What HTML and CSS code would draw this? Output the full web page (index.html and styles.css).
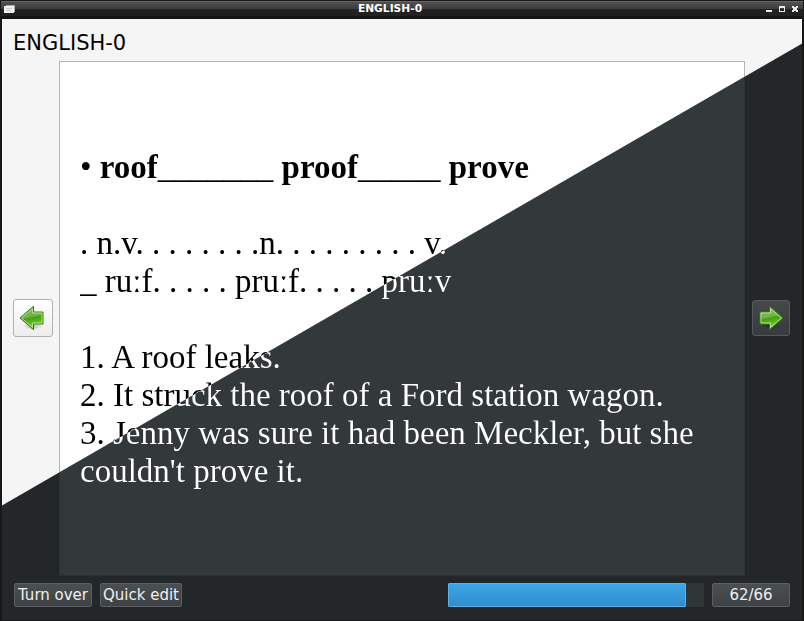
FILE: index.html
```html
<!DOCTYPE html>
<html lang="en">
<head>
<meta charset="utf-8">
<title>ENGLISH-0</title>
<link rel="stylesheet" href="styles.css">
</head>
<body>
<div class="window">
  <header class="titlebar">
    <svg class="app-icon" width="12" height="10" viewBox="0 0 12 10"><path d="M2 1h9v7H2z" fill="#aaa"/><path d="M0 2h10v7H0z" fill="#f1f1ee"/><path d="M2 4.500h6M2 6.500h5" stroke="#ccc"/></svg>
    <span class="caption">ENGLISH-0</span>
    <svg class="controls" width="34" height="8" viewBox="0 0 34 8" shape-rendering="crispEdges"><path d="M0 5h6v2H0z" fill="#e8e8e8"/><path fill-rule="evenodd" d="M13 1h6v6h-6zM14 3v3h4V3z" fill="#e8e8e8"/><path d="M26 1h2v1h2V1h2v2h-1v2h1v2h-2V6h-2v1h-2V5h1V3h-1z" fill="#e8e8e8"/></svg>
  </header>
  <main class="content">
    <h1 class="deck">ENGLISH-0</h1>
    <section class="review">
      <button class="nav prev" aria-label="Previous">
        <svg width="26" height="26" viewBox="0 0 26 26"><defs><linearGradient id="green" x1="0" y1="0" x2=".2" y2="1"><stop offset="0" stop-color="#8cc765"/><stop offset=".5" stop-color="#6cb346"/><stop offset=".58" stop-color="#45a010"/><stop offset="1" stop-color="#7bd52a"/></linearGradient><radialGradient id="shade"><stop offset="0" stop-opacity=".25"/><stop offset="1" stop-opacity="0"/></radialGradient></defs><ellipse cx="14" cy="21" rx="10" ry="4" fill="url(#shade)"/><path d="M1 13 14.500 1.300V7h9.500v12h-9.500v5.700z" fill="url(#green)" stroke="#327810"/><path d="M2.600 13 13.500 3.600V8H23v10h-9.500v4.400z" fill="none" stroke="#b9e39a" stroke-width=".9"/></svg>
      </button>
      <div class="card"><div class="face"><article class="text"><p>• <b>roof</b>_______ <b>proof</b>_____ <b>prove</b></p><p class="gap">. n.v. . . . . . . .n. . . . . . . . . v.</p><p>_ ruːf. . . . . pruːf. . . . . pruːv</p><p class="gap">1. A roof leaks.</p><p>2. It struck the roof of a Ford station wagon.</p><p>3. Jenny was sure it had been Meckler, but she<br>couldn't prove it.</p></article></div></div>
      <button class="nav next" aria-label="Next">
        <svg width="26" height="26" viewBox="0 0 26 26"><ellipse cx="12" cy="21" rx="10" ry="4" fill="url(#shade)"/><path d="M25 13 11.500 1.300V7H2v12h9.500v5.700z" fill="url(#green)" stroke="#357d12"/><path d="M23.400 13 12.500 3.600V8H3v10h9.500v4.400z" fill="none" stroke="#b9e39a" stroke-width=".9"/></svg>
      </button>
    </section>
    <footer class="toolbar">
      <button class="btn turn">Turn over</button>
      <button class="btn edit">Quick edit</button>
      <div class="progress"><div class="bar"></div></div>
      <button class="btn count">62/66</button>
    </footer>
  </main>
</div>
</body>
</html>
```
FILE: styles.css
```css
* { box-sizing: border-box; }
body { margin: 0; background: #161616; font-family: "DejaVu Sans", sans-serif; }
svg { display: block; }
p, h1 { margin: 0; }
button { margin: 0; padding: 0; font: inherit; }

.window { width: 804px; height: 621px; padding: 0 2px 2px; display: flex; flex-direction: column; background: #171717; overflow: hidden; }
.titlebar {
  flex: none; height: 19px; margin: 0 -1px; padding: 0 3px 2px;
  display: flex; align-items: center;
  background: linear-gradient(#171717 0 1px, #666 1px 2px, #515151 2px, #3d3d3d 9px, #222 9px, #202020 16px, #151515 16px);
}
.app-icon { width: 12px; }
.caption { flex: 1; text-align: center; color: #fff; font-size: 10.67px; line-height: 12px; font-weight: bold; padding-right: 2px; }
.controls { margin-right: 0; }

/* Both themes meet along one diagonal; each stop is the distance from the box's top-left corner. */
.content {
  flex: 1; padding: 8px 12px 12px; display: flex; flex-direction: column;
  background: linear-gradient(150deg, #f5f5f5 420.800px, #232729 421.800px);
}
.deck { height: 34px; margin-left: -1px; font-size: 21px; line-height: 32px; font-weight: normal; color: #000; }
.review { height: 515px; margin-left: -1px; display: flex; align-items: center; }
.nav { flex: none; display: flex; align-items: center; justify-content: center; border: 1px solid; border-radius: 3px; margin-bottom: 2px; }
.nav svg { flex: none; }
.prev { width: 40px; height: 38px; margin-right: 6px; background: linear-gradient(#fff, #ededed); border-color: #b2b2b2; }
.prev svg { margin-right: 2px; }
.next { width: 38px; height: 36px; margin-left: 7px; background: linear-gradient(#45494b, #373b3d); border-color: #55595c; }
.card { flex: none; width: 686px; height: 515px; padding: 1px; background: linear-gradient(150deg, #b4b4b4 355.900px, #2c3032 356.900px); }
.face { height: 100%; padding: 86px 20px 0; background: linear-gradient(150deg, #fff 354.500px, #33383b 355.500px); }
.text {
  color: transparent; font-family: "Liberation Serif", serif; font-size: 33px; line-height: 38px; white-space: nowrap;
  background: linear-gradient(150deg, #000 270.200px, #fff 270.900px);
  -webkit-background-clip: text; background-clip: text;
}
.gap { margin-top: 38px; }

.toolbar { margin-top: 7px; height: 25px; display: flex; }
.btn { height: 24px; border: 1px solid #5b5f61; border-radius: 2px; background: linear-gradient(#4a4f51, #3e4244); color: #eff0f1; font-size: 15px; line-height: 21px; white-space: nowrap; text-align: center; }
.turn { width: 78px; margin-right: 8px; }
.edit { width: 82px; }
.progress { width: 256px; height: 24px; margin-left: auto; margin-right: 8px; background: #303538; }
.bar { width: 237.500px; height: 24px; background: linear-gradient(#3ca6e8, #318dca); border: 1px solid #56b2ea; border-radius: 1px; }
.count { width: 78px; }
```
